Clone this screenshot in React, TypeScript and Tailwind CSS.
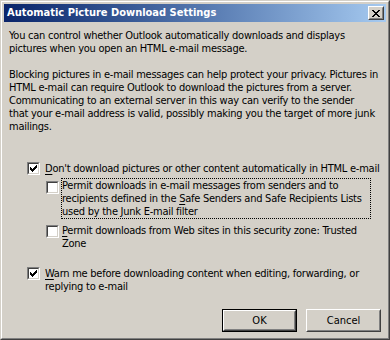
import React from "react";

const FONT =
  "font-['DejaVu_Sans_Condensed','DejaVu_Sans',sans-serif] [font-stretch:condensed]";

function CheckBox({ checked }: { checked?: boolean }) {
  const cols = [2, 3, 4, 3, 2, 1, 0];
  return (
    <div className="w-[13px] h-[13px] shrink-0 border border-t-[#808080] border-l-[#808080] border-b-white border-r-white">
      <div className="w-full h-full border border-t-[#404040] border-l-[#404040] border-b-[#d4d0c8] border-r-[#d4d0c8] bg-white">
        {checked && (
          <svg width="9" height="9" viewBox="0 0 9 9" shapeRendering="crispEdges" className="block">
            {cols.map((r, i) => (
              <rect key={i} x={1 + i} y={1 + r} width="1" height="3" fill="#000" />
            ))}
          </svg>
        )}
      </div>
    </div>
  );
}

function CloseGlyph() {
  const rows = [
    [0, 1, 6, 7],
    [1, 2, 5, 6],
    [2, 3, 4, 5],
    [3, 4],
    [2, 3, 4, 5],
    [1, 2, 5, 6],
    [0, 1, 6, 7],
  ];
  return (
    <svg width="8" height="7" viewBox="0 0 8 7" shapeRendering="crispEdges" className="block">
      {rows.map((r, y) =>
        r.map((x) => <rect key={`${x}-${y}`} x={x} y={y} width="1" height="1" fill="#000" />)
      )}
    </svg>
  );
}

function U({ children }: { children: React.ReactNode }) {
  return <span className="underline underline-offset-[2px] decoration-1">{children}</span>;
}

export default function App() {
  return (
    <div className={`w-[390px] h-[340px] bg-[#d4d0c8] text-black ${FONT}`}>
      <div className="w-full h-full border border-t-[#d4d0c8] border-l-[#d4d0c8] border-b-[#404040] border-r-[#404040]">
        <div className="w-full h-full border border-t-white border-l-white border-b-[#808080] border-r-[#808080] p-[2px] flex flex-col">
          {/* Title bar */}
          <div className="h-[18px] shrink-0 bg-linear-to-r from-[#0a246a] to-[#a6caf0] flex items-center justify-between pl-[3px] pr-[2px]">
            <span className="text-white font-bold text-[11px] leading-[18px] whitespace-nowrap">
              Automatic Picture Download Settings
            </span>
            <div className="w-[16px] h-[14px] bg-[#d4d0c8] border border-t-white border-l-white border-b-[#404040] border-r-[#404040]">
              <div className="w-full h-full border border-t-[#d4d0c8] border-l-[#d4d0c8] border-b-[#808080] border-r-[#808080] flex items-center justify-center">
                <CloseGlyph />
              </div>
            </div>
          </div>

          {/* Content */}
          <div className="flex-1 flex flex-col text-[11px] leading-[13px] tracking-[-0.25px] whitespace-nowrap">
            <p className="mt-[7px] pl-[5px]">
              You can control whether Outlook automatically downloads and displays
              <br />
              pictures when you open an HTML e-mail message.
            </p>
            <p className="mt-[13px] pl-[5px]">
              Blocking pictures in e-mail messages can help protect your privacy. Pictures in
              <br />
              HTML e-mail can require Outlook to download the pictures from a server.
              <br />
              Communicating to an external server in this way can verify to the sender
              <br />
              that your e-mail address is valid, possibly making you the target of more junk
              <br />
              mailings.
            </p>

            <div className="mt-[28px] pl-[23px] flex items-start gap-[4px]">
              <div className="mt-[1px]">
                <CheckBox checked />
              </div>
              <div className="border border-transparent">
                <U>D</U>on't download pictures or other content automatically in HTML e-mail
              </div>
            </div>

            <div className="mt-[2px] pl-[42px] flex items-start gap-[2px]">
              <div className="mt-[3px]">
                <CheckBox />
              </div>
              <div className="w-[310px] border border-dotted border-black">
                Permit downloads in e-mail messages from senders and to
                <br />
                recipients defined in the <U>S</U>afe Senders and Safe Recipients Lists
                <br />
                used by the Junk E-mail filter
              </div>
            </div>

            <div className="mt-[4px] pl-[42px] flex items-start gap-[2px]">
              <div className="mt-[2px]">
                <CheckBox />
              </div>
              <div className="border border-transparent">
                <U>P</U>ermit downloads from Web sites in this security zone: Trusted
                <br />
                Zone
              </div>
            </div>

            <div className="mt-[15px] pl-[23px] flex items-start gap-[4px]">
              <div className="mt-[1px]">
                <CheckBox checked />
              </div>
              <div className="border border-transparent">
                <U>W</U>arn me before downloading content when editing, forwarding, or
                <br />
                replying to e-mail
              </div>
            </div>

            <div className="mt-[15px] pr-[5px] flex justify-end gap-[9px] tracking-normal">
              <div className="w-[75px] h-[23px] border border-black">
                <div className="w-full h-full border border-t-white border-l-white border-b-[#404040] border-r-[#404040]">
                  <div className="w-full h-full border border-t-[#d4d0c8] border-l-[#d4d0c8] border-b-[#808080] border-r-[#808080] flex items-center justify-center">
                    OK
                  </div>
                </div>
              </div>
              <div className="w-[75px] h-[23px] border border-t-white border-l-white border-b-[#404040] border-r-[#404040]">
                <div className="w-full h-full border border-t-[#d4d0c8] border-l-[#d4d0c8] border-b-[#808080] border-r-[#808080] flex items-center justify-center">
                  Cancel
                </div>
              </div>
            </div>
          </div>
        </div>
      </div>
    </div>
  );
}
